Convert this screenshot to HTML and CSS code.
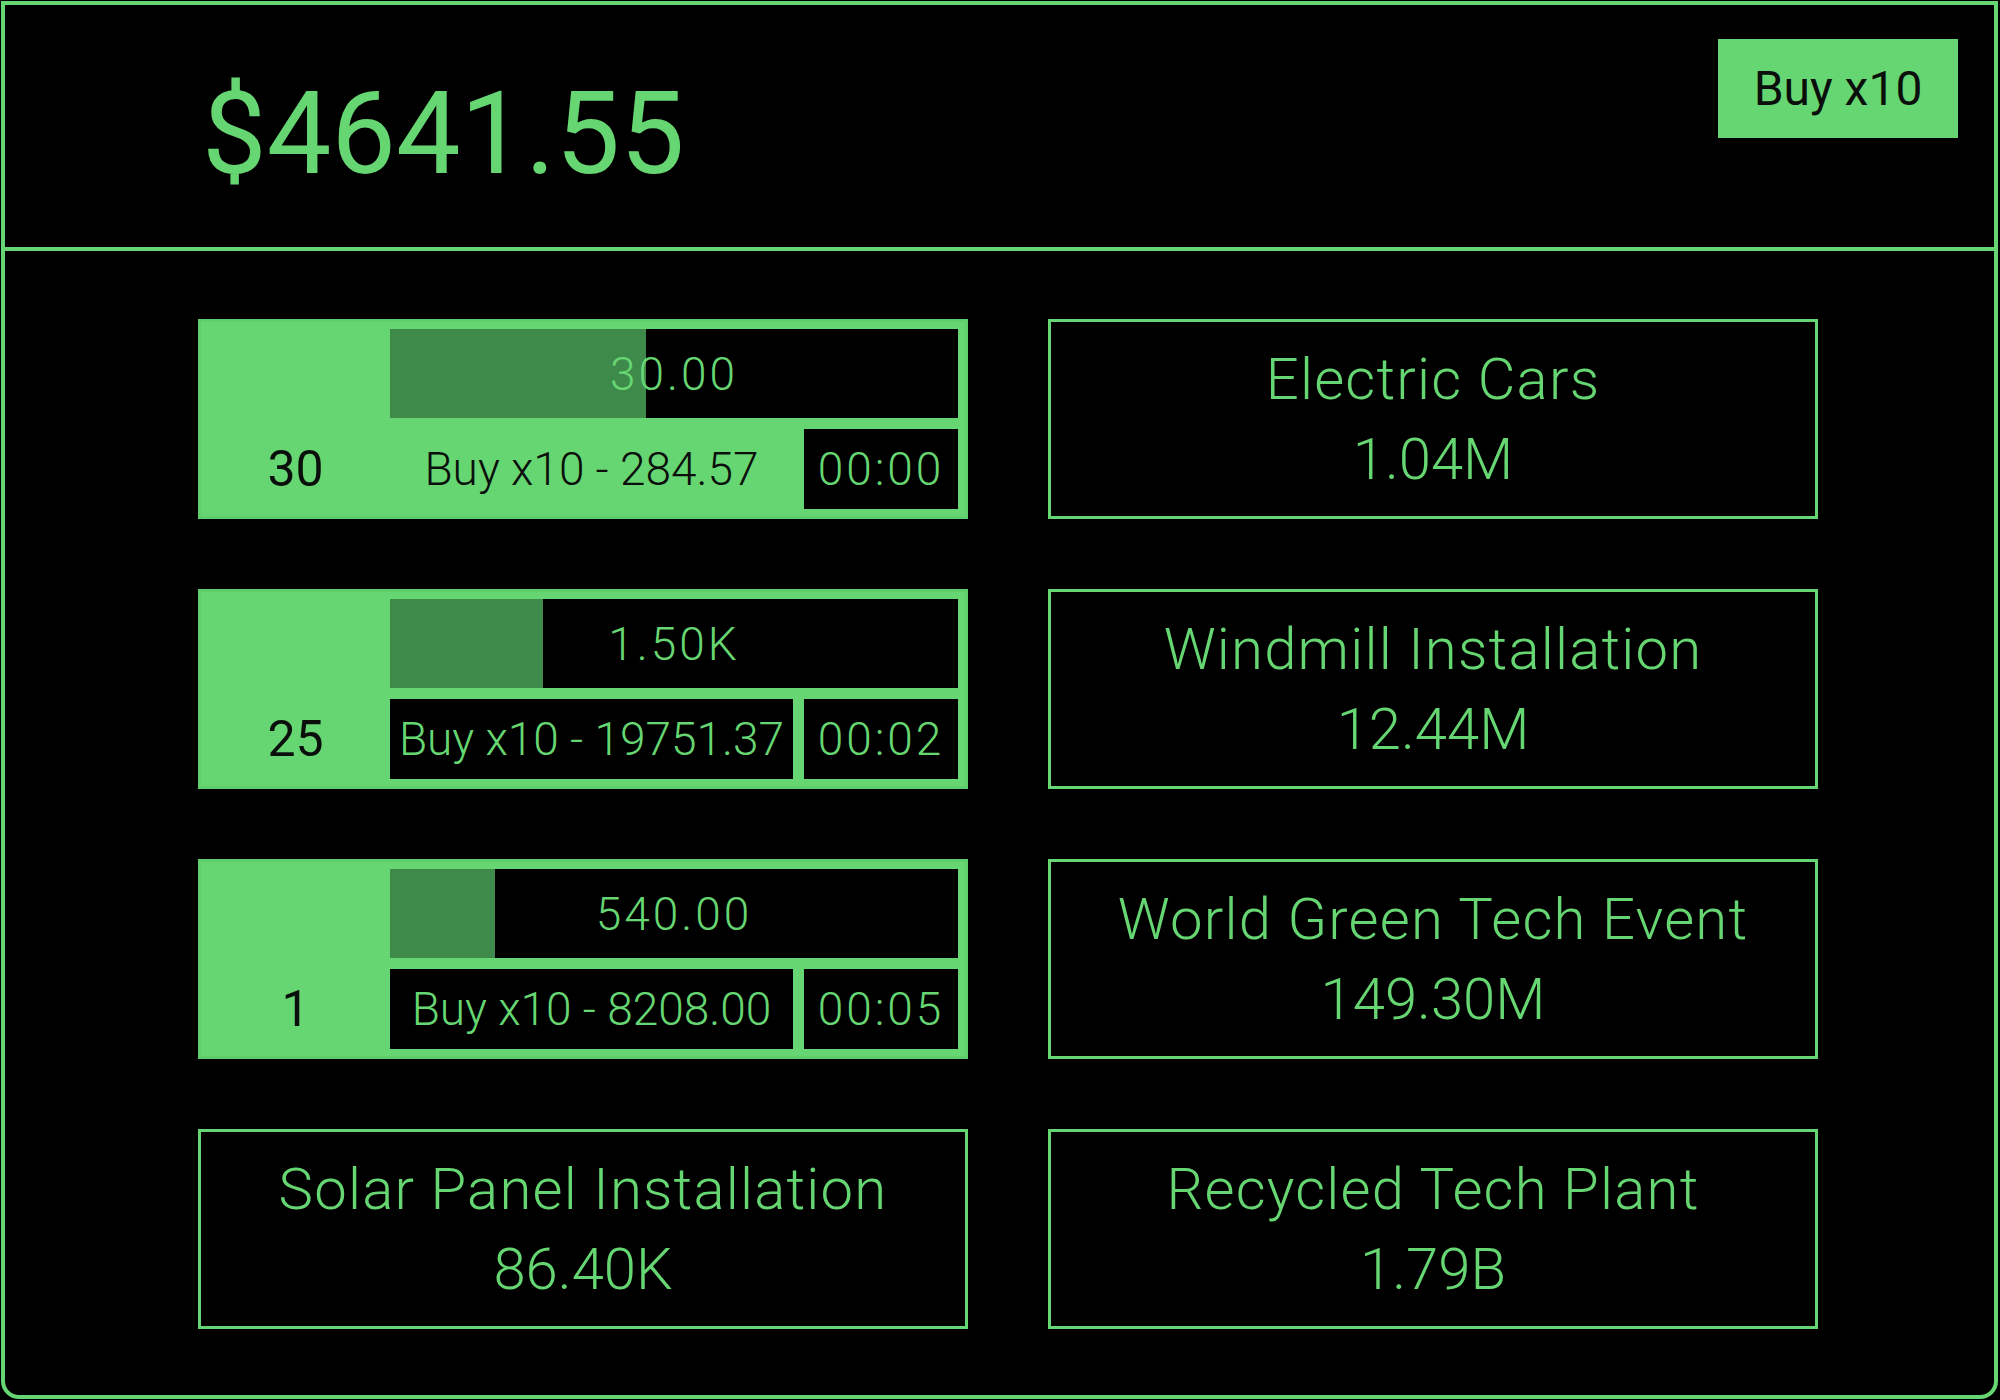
FILE: index.html
```html
<!DOCTYPE html>
<html lang="en">
<head>
<meta charset="utf-8">
<title>Green Tycoon</title>
<link rel="stylesheet" href="styles.css">
</head>
<body>
<div class="app">
  <header class="header">
    <div class="money">$4641.55</div>
    <button class="buy-mode">Buy x10</button>
  </header>
  <main class="grid">
    <div class="biz">
      <div class="count">30</div>
      <div class="biz-body">
        <div class="bar"><div class="fill" style="width:45%"></div><span class="bar-text">30.00</span></div>
        <div class="biz-row">
          <div class="buy affordable">Buy x10 - 284.57</div>
          <div class="timer">00:00</div>
        </div>
      </div>
    </div>
    <div class="locked"><div class="title">Electric Cars</div><div>1.04M</div></div>

    <div class="biz">
      <div class="count">25</div>
      <div class="biz-body">
        <div class="bar"><div class="fill" style="width:27%"></div><span class="bar-text">1.50K</span></div>
        <div class="biz-row">
          <div class="buy">Buy x10 - 19751.37</div>
          <div class="timer">00:02</div>
        </div>
      </div>
    </div>
    <div class="locked"><div class="title">Windmill Installation</div><div>12.44M</div></div>

    <div class="biz">
      <div class="count">1</div>
      <div class="biz-body">
        <div class="bar"><div class="fill" style="width:18.5%"></div><span class="bar-text">540.00</span></div>
        <div class="biz-row">
          <div class="buy">Buy x10 - 8208.00</div>
          <div class="timer">00:05</div>
        </div>
      </div>
    </div>
    <div class="locked"><div class="title">World Green Tech Event</div><div>149.30M</div></div>

    <div class="locked"><div class="title">Solar Panel Installation</div><div>86.40K</div></div>
    <div class="locked"><div class="title">Recycled Tech Plant</div><div>1.79B</div></div>
  </main>
</div>
</body>
</html>
```
FILE: styles.css
```css
* { box-sizing: border-box; }
html, body { margin: 0; padding: 0; background: #000; }
body {
  font-family: Roboto, "Liberation Sans", sans-serif;
  font-weight: 300;
  color: #66d672;
  padding: 1px 0 0 1px;
}
.app {
  width: 1997px;
  height: 1398px;
  border: 4px solid #66d672;
  border-radius: 0 0 18px 18px;
  background: #000;
}
.header {
  height: 246px;
  border-bottom: 4px solid #66d672;
  display: flex;
  justify-content: space-between;
  align-items: flex-start;
  padding: 34px 36px 0 197px;
}
.money {
  margin-top: 37px;
  font-size: 115px;
  font-weight: 400;
  line-height: 1;
}
.buy-mode {
  width: 240px;
  height: 99px;
  border: none;
  background: #66d672;
  color: #0b0f0b;
  font-family: inherit;
  font-weight: 400;
  font-size: 48px;
  padding: 0;
}
.grid {
  display: grid;
  grid-template-columns: 770px 770px;
  grid-auto-rows: 200px;
  column-gap: 80px;
  row-gap: 70px;
  padding: 68px 0 0 193px;
}
.biz {
  display: flex;
  background: #66d672;
  border: 3px solid #5fcf6b;
  padding: 7px 7px 7px 0;
}
.count {
  width: 189px;
  display: flex;
  align-items: flex-end;
  justify-content: center;
  height: 100%;
  padding-bottom: 14px;
  font-size: 50px;
  font-weight: 400;
  color: #0b0f0b;
  line-height: 52px;
}
.biz-body {
  flex: 1;
  display: flex;
  flex-direction: column;
  gap: 11px;
}
.bar {
  position: relative;
  height: 89px;
  background: #000;
  display: flex;
  align-items: center;
  justify-content: center;
}
.fill {
  position: absolute;
  left: 0;
  top: 0;
  bottom: 0;
  background: #3e8a4a;
}
.bar-text {
  position: relative;
  font-size: 46px;
  letter-spacing: 3px;
}
.biz-row {
  height: 80px;
  display: flex;
  gap: 11px;
}
.buy, .timer {
  display: flex;
  align-items: center;
  justify-content: center;
  background: #000;
  font-size: 46px;
  white-space: nowrap;
}
.buy { flex: 1; }
.buy.affordable {
  background: #66d672;
  color: #0b0f0b;
}
.timer {
  width: 154px;
  letter-spacing: 3px;
}
.locked {
  border: 3px solid #66d672;
  display: flex;
  flex-direction: column;
  align-items: center;
  justify-content: center;
  font-size: 58px;
  line-height: 80px;
}
.title { letter-spacing: 1.2px; }
```
